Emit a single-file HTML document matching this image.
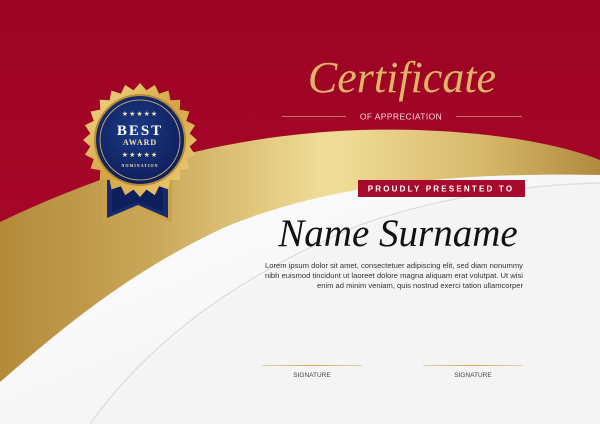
<!DOCTYPE html>
<html><head><meta charset="utf-8"><style>
html,body{margin:0;padding:0;width:600px;height:424px;overflow:hidden;background:#fff}
svg{display:block}
</style></head><body>
<svg width="600" height="424" viewBox="0 0 600 424" xmlns="http://www.w3.org/2000/svg">
<defs>
<linearGradient id="red" x1="0" y1="0" x2="0" y2="1"><stop offset="0" stop-color="#9c0423"/><stop offset="1" stop-color="#b0082c"/></linearGradient>
<linearGradient id="gold" x1="0" y1="0" x2="1" y2="0"><stop offset="0" stop-color="#b38a3a"/><stop offset="0.25" stop-color="#c9a658"/><stop offset="0.55" stop-color="#f0de98"/><stop offset="0.8" stop-color="#d7b96c"/><stop offset="1" stop-color="#b08a3e"/></linearGradient>
<linearGradient id="white" x1="0" y1="0" x2="1" y2="1"><stop offset="0" stop-color="#ffffff"/><stop offset="1" stop-color="#eeeeee"/></linearGradient>
<linearGradient id="badgeGold" x1="0" y1="0" x2="1" y2="1"><stop offset="0" stop-color="#f5dd8e"/><stop offset="0.5" stop-color="#d3a543"/><stop offset="1" stop-color="#f1d27e"/></linearGradient>
<radialGradient id="blue" cx="0.45" cy="0.4" r="0.6"><stop offset="0" stop-color="#1c3a86"/><stop offset="1" stop-color="#0f1f5c"/></radialGradient>
<linearGradient id="line" x1="0" x2="1"><stop offset="0" stop-color="#c9a458" stop-opacity="0.4"/><stop offset="0.5" stop-color="#d2ab55"/><stop offset="1" stop-color="#c9a458" stop-opacity="0.4"/></linearGradient>
</defs>
<rect width="600" height="424" fill="url(#red)"/>
<path d="M0 222 C120 165 230 135 360 130 C460 127 550 140 600 160 L600 424 L0 424 Z" fill="url(#gold)"/>
<path d="M0 382 C60 330 130 270 230 225 C330 185 450 172 600 175 L600 424 L0 424 Z" fill="url(#white)"/>
<path d="M90 424 C150 340 240 275 360 225 C440 197 520 185 600 183" fill="none" stroke="#cfcfcf" stroke-width="1.5" opacity="0.6"/>
<path d="M92 424 C152 342 242 277 362 227 C442 199 522 187 600 185 L600 424 Z" fill="#f4f4f4"/>

<path d="M103 170 L172 170 L172 223 L138 208 L103 223 Z" fill="#c9a24a"/>
<path d="M107 170 L168 170 L168 218 L138 205 L107 218 Z" fill="#142a72"/>
<path d="M112 170 L163 170 L163 212 L138 202 L112 212 Z" fill="#0f1f5c"/>
<polygon transform="translate(140,140)" fill="url(#badgeGold)" points="57,0 49.6,6.5 55.1,14.8 46.2,19.1 49.4,28.5 39.7,30.4 40.3,40.3 30.4,39.7 28.5,49.4 19.1,46.2 14.8,55.1 6.5,49.6 0,57 -6.5,49.6 -14.8,55.1 -19.1,46.2 -28.5,49.4 -30.4,39.7 -40.3,40.3 -39.7,30.4 -49.4,28.5 -46.2,19.1 -55.1,14.8 -49.6,6.5 -57,0 -49.6,-6.5 -55.1,-14.8 -46.2,-19.1 -49.4,-28.5 -39.7,-30.4 -40.3,-40.3 -30.4,-39.7 -28.5,-49.4 -19.1,-46.2 -14.8,-55.1 -6.5,-49.6 0,-57 6.5,-49.6 14.8,-55.1 19.1,-46.2 28.5,-49.4 30.4,-39.7 40.3,-40.3 39.7,-30.4 49.4,-28.5 46.2,-19.1 55.1,-14.8 49.6,-6.5"/>
<circle cx="140" cy="140" r="46" fill="#b98a34"/>
<circle cx="140" cy="140" r="44" fill="url(#blue)"/>
<circle cx="140" cy="140" r="40" fill="none" stroke="#d8bd77" stroke-width="0.8"/>
<g font-family="Liberation Serif, serif" fill="#f3e3b4" text-anchor="middle">
<text x="140" y="116" font-size="7" letter-spacing="1">★★★★★</text>
<text x="140" y="135" font-size="15" font-weight="bold" letter-spacing="2" fill="#fff">BEST</text>
<text x="140" y="145" font-size="8" font-weight="bold" letter-spacing="1">AWARD</text>
<text x="140" y="157" font-size="7" letter-spacing="1">★★★★★</text>
<text x="140" y="167" font-size="4" font-weight="bold" letter-spacing="1">NOMINATION</text>
</g>

<text x="402" y="92" text-anchor="middle" font-family="Liberation Serif, serif" font-style="italic" font-size="44" fill="#e0b468">Certificate</text>
<rect x="282" y="116" width="64" height="0.8" fill="#c88f6a"/>
<rect x="456" y="116" width="66" height="0.8" fill="#c88f6a"/>
<text x="401" y="119.5" text-anchor="middle" font-family="Liberation Sans, sans-serif" font-size="8.5" fill="#f1dbdb" letter-spacing="0.4">OF APPRECIATION</text>
<rect x="358" y="180" width="167" height="17" fill="#a60a2c"/>
<text x="441" y="191.5" text-anchor="middle" font-family="Liberation Sans, sans-serif" font-size="8" font-weight="bold" fill="#fff" letter-spacing="2.2">PROUDLY PRESENTED TO</text>
<text x="398" y="246" text-anchor="middle" font-family="Liberation Serif, serif" font-style="italic" font-size="39" fill="#111">Name Surname</text>
<g font-family="Liberation Sans, sans-serif" font-size="7" fill="#333">
<text x="265" y="268" textLength="258" lengthAdjust="spacingAndGlyphs">Lorem ipsum dolor sit amet, consectetuer adipiscing elit, sed diam nonummy</text>
<text x="265" y="278" textLength="258" lengthAdjust="spacingAndGlyphs">nibh euismod tincidunt ut laoreet dolore magna aliquam erat volutpat. Ut wisi</text>
<text x="317" y="288" textLength="206" lengthAdjust="spacingAndGlyphs">enim ad minim veniam, quis nostrud exerci tation ullamcorper</text>
</g>
<rect x="262" y="365" width="100" height="1" fill="url(#line)"/>
<rect x="423" y="365" width="100" height="1" fill="url(#line)"/>
<g font-family="Liberation Sans, sans-serif" font-size="6.5" fill="#444" text-anchor="middle">
<text x="312" y="377">SIGNATURE</text>
<text x="473" y="377">SIGNATURE</text>
</g>
</svg>
</body></html>
